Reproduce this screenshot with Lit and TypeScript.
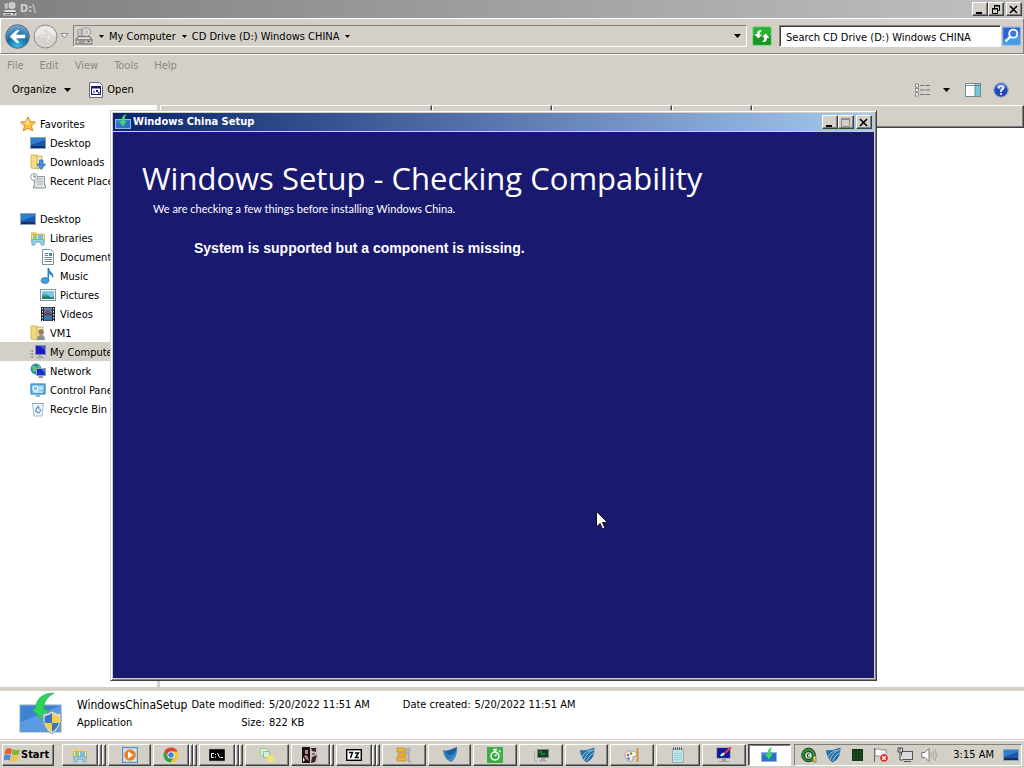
import { LitElement, html, svg, css, TemplateResult } from "lit";
import { customElement, property } from "lit/decorators.js";

const setup = svg`
  <rect x="0.5" y="5.5" width="15" height="9" fill="#3f83d6" stroke="#8fb6e0"/>
  <path d="M1 14V9L15 6V14Z" fill="#2f6fc6"/>
  <path d="M11.500 0C8 1 6.500 3.500 6.500 7H4L8 12.500L11.500 7H9.500C9.500 4 10 2 11.500 0Z" fill="#3ddc62"/>`;

const icons: Record<string, TemplateResult> = {
  drive: svg`
    <path d="M1 11L3 8.500H13L15 11V15H1Z" fill="#e2e1de" stroke="#777"/>
    <path d="M1.500 11.500H14.500" stroke="#555"/><path d="M3 13.300H9" stroke="#666"/><rect x="11" y="12.500" width="2" height="1" fill="#333"/>
    <circle cx="10" cy="4.500" r="3.800" fill="#dcdcda" stroke="#8a8a8a" stroke-width=".8"/><circle cx="10" cy="4.500" r="1.200" fill="#fff" stroke="#777" stroke-width=".6"/>
    <path d="M2 3L6 1.500V8H3Z" fill="#c4c4c2" stroke="#888" stroke-width=".6"/>`,
  doc: svg`
    <path d="M1.500 .5H11.500L14.500 3.500V15.500H1.500Z" fill="#fff" stroke="#667"/>
    <rect x="3.500" y="4.500" width="9" height="8" fill="#fff" stroke="#16167c"/><rect x="3" y="4" width="10" height="2.500" fill="#16167c"/>
    <path d="M5 8.500L6.500 10L5 11.500" stroke="#16167c" fill="none"/><path d="M8 8V10H10V8ZM10 10H11.500V11.500H10Z" fill="#16167c"/>`,
  refresh: svg`
    <rect x=".5" y=".5" width="15" height="15" rx="1" fill="#2fae35" stroke="#8fd692"/><rect x="1" y="8" width="14" height="7" fill="#189522"/>
    <path d="M8 3.500L6 3.200Q4 4 4 6.500H2L5 10L8 7H6Q6 5 8 3.500ZM8 12.500L10 12.800Q12 12 12 9.500H14L11 6L8 9H10Q10 11 8 12.500Z" fill="#fff"/>`,
  search: svg`
    <rect x=".5" y=".5" width="15" height="15" fill="#2f62cf" stroke="#8fb4ee"/><path d="M1 15V11L15 7V15Z" fill="#3fa0e4"/>
    <circle cx="9.500" cy="6" r="3.400" fill="#3c78d8" stroke="#fff" stroke-width="1.600"/><path d="M7 8.500L3 12.500" stroke="#fff" stroke-width="2"/>`,
  views: svg`
    <g fill="#fff" stroke="#777" stroke-width=".8"><rect x=".5" y="2" width="3" height="3"/><rect x=".5" y="6.500" width="3" height="3"/><rect x=".5" y="11" width="3" height="3"/></g>
    <path d="M5 3.500H16M5 8H16M5 12.500H16" stroke="#777" stroke-dasharray="4.500 1"/>`,
  pane: svg`
    <rect x=".5" y="1.500" width="15" height="13" fill="#fff" stroke="#6a8d96"/><rect x="10" y="2" width="5" height="12" fill="#79c3d4"/><path d="M1 3.500H15M10 2V14" stroke="#6a8d96"/>`,
  help: svg`
    <circle cx="8" cy="8" r="7.300" fill="#2348b4" stroke="#a4b2d2" stroke-width="1.200"/><ellipse cx="8" cy="4.500" rx="5" ry="3" fill="#5f86dc"/>
    <path d="M5.700 6.200Q5.700 4 8 4T10.300 6Q10.300 7.300 8 8.500V10" fill="none" stroke="#fff" stroke-width="1.700"/><rect x="7.100" y="11" width="1.800" height="1.800" fill="#fff"/>`,
  star: svg`<path d="M8 .8L10.200 5.600L15.400 6.100L11.500 9.600L12.700 14.800L8 12.100L3.300 14.800L4.500 9.600L.6 6.100L5.800 5.600Z" fill="#ffc63c" stroke="#e0822a"/><path d="M8 3L9.300 6.500L8 9L5 7Z" fill="#ffe9a0"/>`,
  desktop: svg`<rect x="0" y="2" width="16" height="12" fill="#8fa5ba"/><rect x="1" y="3" width="14" height="10" fill="#1b55a8"/><path d="M1 3H15V5L1 10Z" fill="#2f7fd0"/><rect x="1" y="11" width="14" height="2" fill="#123066"/>`,
  downloads: svg`<path d="M1 1H7L9 3V15L1 14Z" fill="#f3dc82" stroke="#c9a94a" stroke-width=".8"/><path d="M7 2H12V14H7Z" fill="#f9eab0" stroke="#c9a94a" stroke-width=".8"/><path d="M9.500 6H13V10H15.500L11.300 15.500L7 10H9.500Z" fill="#3f94de" stroke="#1f64ac" stroke-width=".7"/>`,
  recent: svg`<path d="M4.500 3.500H14.500V12H15.500V15H3.500V13H4.500Z" fill="#e2e6e6" stroke="#8c9699"/><path d="M7 6H13M7 8.500H13M7 11H13" stroke="#a3adb0"/><circle cx="4" cy="4" r="3.400" fill="#fff" stroke="#8c9699"/><path d="M4 2V4H6" stroke="#666" fill="none"/>`,
  libraries: svg`<path d="M1 2H6L7 3.500H14V6H1Z" fill="#eccf6c"/><path d="M1.500 4.500H14.500V12H1.500Z" fill="#f8e8a2" stroke="#d6b552"/><path d="M3 5H7V9H3Z" fill="#8ed084"/><path d="M8 5H13V9H8Z" fill="#7bbbe6"/><path d="M2 15V10.500Q2 9.500 3 9.500H13Q14 9.500 14 10.500V15H11V12H5V15Z" fill="#9ad3f0" stroke="#5aa3cf" stroke-width=".8"/>`,
  documents: svg`<path d="M2.500 .5H10.500L13.500 3.500V15.500H2.500Z" fill="#fff" stroke="#7f93a6"/><path d="M4.500 4.500H8M4.500 6.500H8M4.500 8.500H12M4.500 10.500H12M4.500 12.500H12" stroke="#6e88a4"/><rect x="9" y="4" width="3" height="3" fill="#4d86c4"/>`,
  music: svg`<path d="M7.500 0H9Q9.500 3 12 5T12.500 10.500Q12.500 7 9 6V12.500H7.500Z" fill="#2b86c8"/><ellipse cx="5" cy="12.500" rx="4" ry="3" fill="#3d9fdc" stroke="#1f6ca8" stroke-width=".6"/>`,
  pictures: svg`<rect x=".5" y="2.500" width="15" height="11" fill="#fff" stroke="#8397a8"/><rect x="2" y="4" width="12" height="8" fill="#7cc8ea"/><path d="M2 9Q6 6 9 9T14 9V12H2Z" fill="#23786c"/><path d="M2 8Q4 6 7 8L9 9.500H2Z" fill="#4ca68a"/>`,
  videos: svg`<rect x="1" y="1" width="14" height="14" fill="#23282e"/><rect x="4" y="1.500" width="8" height="6" fill="#4f86b4"/><rect x="4" y="8.500" width="8" height="6" fill="#3c75ac"/><path d="M5 6L8 3.500L11 6.500V7.500H5Z" fill="#8a4a42"/><path d="M2.500 2V15M13.500 2V15" stroke="#e6e6e6" stroke-dasharray="1.500 1.500"/>`,
  user: svg`<path d="M1 1H7L8 3V15L1 14Z" fill="#f0d878" stroke="#c8aa4c" stroke-width=".8"/><path d="M7 2H13V14H7Z" fill="#f7e6a4" stroke="#c8aa4c" stroke-width=".8"/><circle cx="11" cy="7" r="2.700" fill="#9a7a62"/><path d="M7 15Q7 10 11 10T15 15Z" fill="#8a8f94"/>`,
  computer: svg`<path d="M1 6V14M2.500 6V14" stroke="#999" stroke-dasharray="2 1"/><rect x="5.500" y="1.500" width="10" height="9" fill="#1a1ac0" stroke="#8a8fa8"/><path d="M10 2H15V7Z" fill="#3d52e6"/><path d="M8 11H12V13H14V14.500H6V13H8Z" fill="#a9adb8"/>`,
  network: svg`<circle cx="6" cy="6" r="5.400" fill="#2c86b8"/><path d="M2 3Q6 2 7 5T3 9ZM8 1Q11 3 10 6L8 5Z" fill="#5fc27a"/><rect x="6.500" y="5.500" width="9" height="7" fill="#1634c4" stroke="#9aa6bd"/><path d="M11 6H15V10Z" fill="#4470ee"/><path d="M9 13H13V15H8Z" fill="#8e97a6"/>`,
  control: svg`<rect x=".5" y="1.500" width="15" height="11" rx="1" fill="#4a9ad6" stroke="#8ab2cf"/><rect x="2" y="3" width="12" height="8" fill="#79c0ec"/><circle cx="5.500" cy="6.500" r="2.500" fill="none" stroke="#fff" stroke-width="1.200"/><path d="M9 5H13M9 7H13M4 10H12" stroke="#fff"/><path d="M6 13H10V15H5Z" fill="#9fb4c4"/>`,
  recycle: svg`<path d="M2.500 2.500H13.500L12 15H4Z" fill="#f1f6fa" stroke="#a9bccb"/><path d="M2 2.500H14" stroke="#8fa5b8"/><path d="M8 5.500L10.500 9.500L9 11.500H6.500L5.500 9Z" fill="none" stroke="#4c86cf" stroke-width="1.400" stroke-dasharray="2.500 .8"/>`,
  setup,
  flag: svg`<path d="M1.500 2.500Q4.500 .5 8 2L7 7.200Q4 6 .5 7.500Z" fill="#e8612c"/><path d="M8.700 2.300Q12 4 16 2.200L14.800 7.500Q11 9 7.700 7.500Z" fill="#7db83a"/><path d="M.3 8.300Q3.500 7 6.800 8.200L5.800 13.500Q3 12 -.7 13.700Z" fill="#4a8fd8"/><path d="M7.500 8.300Q11 10 14.600 8.500L13.500 13.700Q10 15.200 6.500 13.700Z" fill="#f6c33a"/>`,
  media: svg`<rect x=".5" y=".5" width="15" height="15" fill="#d6e4f2" stroke="#5f8fc2" stroke-width="1.400"/><circle cx="8" cy="8" r="5.800" fill="#ef7f1c"/><path d="M6 4.500L11.500 8L6 11.500Z" fill="#fff"/>`,
  chrome: svg`<circle cx="8" cy="8" r="7.500" fill="#f7c632"/><path d="M8 .5A7.500 7.500 0 0 0 1.500 4.200L5 10L8 4.500H14.600A7.500 7.500 0 0 0 8 .5Z" fill="#dd4335"/><path d="M1.500 4.200A7.500 7.500 0 0 0 7.500 15.500L11 9.700L5 10Z" fill="#2fa04e"/><circle cx="8" cy="8" r="3.600" fill="#fff"/><circle cx="8" cy="8" r="2.700" fill="#3c7fe8"/>`,
  cmd: svg`<rect x="0" y="2" width="16" height="12" fill="#000" stroke="#999" stroke-width=".6"/><path d="M5 6.500H2.500V10.500H5M6.500 7V8M6.500 9.500V10.500M8.500 6L10.500 10.500M11.500 10.500H14" stroke="#fff" fill="none"/>`,
  folders: svg`<rect x="1.500" y="1.500" width="7" height="7" fill="#dff0cf" stroke="#9fcf80"/><rect x="4.500" y="4.500" width="6" height="6" fill="#d4efda" stroke="#7cc4ae"/><rect x="8" y="8" width="7" height="7" fill="#f4e07a"/>`,
  faces: svg`<rect width="8" height="16" fill="#1a1218"/><rect x="8" width="8" height="16" fill="#cdbfc2"/><path d="M3 3H6V7H3ZM2 9L5 8L7 14L4 12Z" fill="#b88b8b"/><path d="M9 1H14V5L10 4ZM10 10L15 8L13 15L9 16Z" fill="#3a2228"/><path d="M10 6H13V8H10Z" fill="#9d6060"/><path d="M1 10L3 13L1 15Z" fill="#e6dada"/>`,
  sevenzip: svg`<rect x=".7" y="2.700" width="14.600" height="10.600" fill="#fff" stroke="#000" stroke-width="1.400"/><path d="M3 5.500H6.500L4.500 11M9 6H12.500L9.500 10.500H13" stroke="#000" stroke-width="1.400" fill="none"/>`,
  winrar: svg`<path d="M1 1H9V5H1ZM2 6H10V9H2ZM1 10H10V14H1Z" fill="#efb62c" stroke="#b98a2a" stroke-width=".7"/><path d="M11 1H14V4H13V12L15 15H12V6H10V3Z" fill="#b8bcc0" stroke="#888" stroke-width=".5"/>`,
  shield: svg`<path d="M1 3Q6 5 15 0Q15.500 11 9 15Q2 12 1 3Z" fill="#2a7cbc"/><path d="M4 4.500L15 0Q13 8 8 8Q5 8 4 4.500Z" fill="#1c5e96"/><path d="M6 13Q12 10 14 5Q14 11 9 15Z" fill="#3c94d0"/>`,
  timer: svg`<rect width="16" height="16" fill="#3fae49"/><circle cx="8" cy="9" r="4" fill="none" stroke="#fff" stroke-width="1.500"/><path d="M6 2.500H10M8 3V5M8 9L10 7M12 3.500L13.500 5" stroke="#fff" stroke-width="1.300"/>`,
  vm: svg`<path d="M1.500 4V14H4" stroke="#aaa" fill="none"/><rect x="4.500" y="2.500" width="11" height="8" fill="#123c24" stroke="#77857c"/><path d="M6 5H9M8 7H12" stroke="#3fbf5c"/><path d="M8 11H12V13H14V14.500H6V13H8Z" fill="#a6aaae"/>`,
  wings: svg`<path d="M1 3Q7 4 15.500 .5Q16 12 7.500 15.500Q1.500 11 1 3Z" fill="#236fa8"/><path d="M5 13Q7 6 15 2.500M7.500 14Q9 9 15 5.500M3 10Q5 5 12 3" stroke="#a8d0ea" fill="none" stroke-width=".9"/>`,
  paint: svg`<path d="M1 9Q1 4 7 4T13 8Q12 10 10 9.500T9 13Q8 15 5 14T1 9Z" fill="#f2efe6" stroke="#9fa6ad"/><circle cx="4" cy="8" r="1.200" fill="#d94d3a"/><circle cx="7" cy="6.500" r="1.200" fill="#4c9e3f"/><circle cx="4.500" cy="11.500" r="1.200" fill="#3b72d0"/><path d="M13.500 1V15" stroke="#d8913a" stroke-width="2"/>`,
  notepad: svg`<rect x="2.500" y="2.500" width="11" height="13" fill="#bfe3e6" stroke="#8fb0b4"/><path d="M4 6.500H12M4 8.500H12M4 10.500H12M4 12.500H12" stroke="#a4d0d6"/><path d="M3 1.500H13" stroke="#444" stroke-width="2" stroke-dasharray="1 1"/>`,
  display: svg`<rect x="1" y="1" width="13" height="10" fill="#11159c" stroke="#555" stroke-width=".6"/><path d="M4 9Q5 5 9 6L8 9Z" fill="#28c2a8"/><path d="M15 0L8 7" stroke="#e23c52" stroke-width="2"/><path d="M5 9L8 6" stroke="#fff" stroke-width="1.500"/><path d="M6 12H10V14H13V15H3V14H6Z" fill="#9aa0a6"/>`,
  gauge: svg`<circle cx="7.500" cy="8" r="6.800" fill="#2c9a3c" stroke="#1e3a22"/><circle cx="7.500" cy="8.500" r="4" fill="#d9f0d9" stroke="#154a1c" stroke-width="1.400"/><path d="M9 7H6.500V10H9" stroke="#154a1c" fill="none"/><rect x="12" y="9" width="3" height="6" fill="#e8cf3a" stroke="#555" stroke-width=".6"/>`,
  cpu: svg`<rect x="3" y="2" width="11" height="12" fill="#0c3412"/><path d="M5.500 2V14M8.500 2V14M11.500 2V14M3 5H14M3 8H14M3 11H14" stroke="#1f5a28" stroke-width=".7"/>`,
  alert: svg`<path d="M1.500 15V1" stroke="#666"/><path d="M2 2.500Q5 1 7 2.500T13 2.500V9H2Z" fill="#fff" stroke="#888"/><circle cx="11" cy="11" r="4.300" fill="#dc3030" stroke="#fff" stroke-width=".6"/><path d="M9.300 9.300L12.700 12.700M12.700 9.300L9.300 12.700" stroke="#fff" stroke-width="1.300"/>`,
  lan: svg`<rect x="4.500" y="4.500" width="11" height="8" fill="#d8dadc" stroke="#555"/><path d="M7 14.500H14" stroke="#555"/><path d="M1 1H5.500V5H1ZM3 5V13H6" fill="#eee" stroke="#444"/><path d="M3 1V4" stroke="#444"/>`,
  sound: svg`<path d="M.8 5.500H4L8 1.500V14.500L4 10.500H.8Z" fill="#fff" stroke="#777"/><path d="M10 5.500Q11.500 8 10 10.500M12 3.500Q14.500 8 12 12.500M14 2Q17 8 14 14" fill="none" stroke="#999" stroke-width=".8"/>`,
};

const icon = (name: string) =>
  html`<svg class="icon" viewBox="0 0 16 16" aria-hidden="true">${icons[name]}</svg>`;
const caret = html`<svg class="caret" viewBox="0 0 7 4" aria-hidden="true"><path d="M0 0H7L3.500 4Z" fill="#000"/></svg>`;

const base = css`
  * { box-sizing: border-box; }
  button, input {
    font: inherit; color: inherit; background: none; border: 0; padding: 0; margin: 0; border-radius: 0;
  }
  .icon { width: 16px; height: 16px; flex: none; display: block; }
  .caret { width: 7px; height: 4px; flex: none; display: block; }
`;

@customElement("window-controls")
class WindowControls extends LitElement {
  @property() middle = "maximize";
  @property({ type: Boolean }) muted = false;
  static styles = [base, css`
    :host { display: flex; flex: none; }
    .ctl {
      width: 16px; height: 14px; background: #d4d0c8; display: grid; place-items: center;
      border: 1px solid; border-color: #fff #404040 #404040 #fff; box-shadow: inset -1px -1px #808080;
    }
    .close { margin-left: 2px; }
    svg { width: 10px; height: 9px; display: block; }
  `];
  render() {
    const ink = this.muted ? "#8f8c84" : "#000";
    return html`
      <button class="ctl" aria-label="Minimize"><svg viewBox="0 0 10 9"><path d="M1 8H7" stroke="#000" stroke-width="2"/></svg></button>
      <button class="ctl" aria-label=${this.middle}><svg viewBox="0 0 10 9">${this.middle === "restore"
        ? svg`<path d="M3.500 3V.5H8.500V5.500H6.500M3 1H9M1.500 3.500H6.500V8.500H1.500ZM1 4H7" fill="none" stroke="#000"/>`
        : svg`<path d="M.5 .5H8.500V8.500H.5ZM0 1.500H9" fill="none" stroke=${ink}/>`}</svg></button>
      <button class="ctl close" aria-label="Close"><svg viewBox="0 0 10 9"><path d="M1 1L8 8M8 1L1 8" stroke="#000" stroke-width="1.600"/></svg></button>`;
  }
}

@customElement("folder-tree")
class FolderTree extends LitElement {
  static styles = [base, css`
    :host { display: block; padding-top: 9px; overflow: hidden; }
    .list { list-style: none; margin: 0; padding: 0; }
    .group + .group { margin-top: 19px; }
    .row { display: flex; align-items: center; gap: 4px; width: 100%; height: 19px; white-space: nowrap; }
    .label { padding-top: 2px; }
    .l0 { padding-left: 20px; }
    .l1 { padding-left: 30px; }
    .l2 { padding-left: 40px; }
    .current { background: #d4d0c8; }
  `];
  groups: [number, string, string][][] = [
    [[0, "star", "Favorites"], [1, "desktop", "Desktop"], [1, "downloads", "Downloads"], [1, "recent", "Recent Places"]],
    [[0, "desktop", "Desktop"], [1, "libraries", "Libraries"], [2, "documents", "Documents"], [2, "music", "Music"],
     [2, "pictures", "Pictures"], [2, "videos", "Videos"], [1, "user", "VM1"], [1, "computer", "My Computer"],
     [1, "network", "Network"], [1, "control", "Control Panel"], [1, "recycle", "Recycle Bin"]],
  ];
  render() {
    return this.groups.map(g => html`<ul class="list group">${g.map(([level, ic, label]) => html`
      <li><button class="row l${level} ${ic === "computer" ? "current" : ""}">${icon(ic)}<span class="label">${label}</span></button></li>`)}</ul>`);
  }
}

@customElement("setup-window")
class SetupWindow extends LitElement {
  static styles = [base, css`
    :host {
      display: flex; flex-direction: column; background: #d4d0c8; padding: 1px;
      border: 1px solid; border-color: #d4d0c8 #404040 #404040 #d4d0c8;
      box-shadow: inset 1px 1px #fff, inset -1px -1px #808080;
    }
    .bar {
      display: flex; align-items: center; gap: 2px; height: 18px; margin: 1px 1px 0; padding: 0 2px;
      background: linear-gradient(to right, #0a246a, #a6caf0); color: #fff;
    }
    .name { flex: 1; font-size: 11px; line-height: 14px; font-weight: 700; margin: 0; }
    .body { flex: 1; margin: 1px; background: #191970; color: #fff; padding: 27px 29px; }
    .title { margin: 0; font: 400 31px/38px "Open Sans", sans-serif; white-space: nowrap; }
    .sub { margin: 4px 0 0 11px; font: 11px/16px "Lato", sans-serif; }
    .message { margin: 23px 0 0 52px; font: 700 14px/16px "Liberation Sans", sans-serif; }
  `];
  render() {
    return html`
      <header class="bar">${icon("setup")}<h2 class="name">Windows China Setup</h2><window-controls muted></window-controls></header>
      <section class="body">
        <h1 class="title">Windows Setup - Checking Compability</h1>
        <p class="sub">We are checking a few things before installing Windows China.</p>
        <p class="message">System is supported but a component is missing.</p>
      </section>`;
  }
}

@customElement("task-bar")
class TaskBar extends LitElement {
  static styles = [base, css`
    :host { display: flex; gap: 8px; height: 28px; padding: 3px 2px 2px; background: #d4d0c8; border-top: 1px solid #fff; box-shadow: 0 -1px #d4d0c8; }
    .raised { background: #d4d0c8; border: 1px solid; border-color: #fff #404040 #404040 #fff; box-shadow: inset -1px -1px #808080; }
    .start { display: flex; align-items: center; gap: 1px; width: 52px; padding-left: 1px; font-weight: 700; }
    .tasks { flex: 1; display: grid; grid-template-columns: repeat(16, 1fr); gap: 2px; min-width: 0; }
    .task { display: flex; align-items: stretch; min-width: 0; }
    .face { flex: 1; display: grid; place-items: center; min-width: 0; }
    .leaf { width: 4px; }
    .task.active .face { background: #fff; border-color: #404040 #fff #fff #404040; box-shadow: inset 1px 1px #808080; }
    .tray { display: flex; align-items: center; gap: 8px; margin-left: -5px; padding: 0 2px 0 6px; border: 1px solid; border-color: #808080 #fff #fff #808080; }
    .clock { margin: 0 1px 0 8px; white-space: nowrap; }
  `];
  tasks: [string, string, number][] = [
    ["libraries", "Explorer", 2], ["media", "Media Player", 0], ["chrome", "Chrome", 2], ["cmd", "Command Prompt", 2],
    ["folders", "Folders", 0], ["faces", "Photo", 1], ["sevenzip", "7-Zip", 2], ["winrar", "Archive", 0],
    ["shield", "Shield", 0], ["timer", "Timer", 0], ["vm", "Virtual machine", 0], ["wings", "Security", 0],
    ["paint", "Paint", 0], ["notepad", "Notepad", 0], ["display", "Display", 0], ["setup", "Windows China Setup", 0],
  ];
  render() {
    return html`
      <button class="raised start">${icon("flag")}Start</button>
      <nav class="tasks">${this.tasks.map(([ic, label, leaves]) => html`
        <div class="task ${ic === "setup" ? "active" : ""}">
          <button class="raised face" aria-label=${label}>${icon(ic)}</button>
          ${Array.from({ length: leaves }, () => html`<span class="raised leaf"></span>`)}
        </div>`)}</nav>
      <div class="tray">${["gauge", "wings", "cpu", "alert", "lan", "sound"].map(icon)}
        <time class="clock">3:15 AM</time>${icon("desktop")}</div>`;
  }
}

@customElement("app-root")
class AppRoot extends LitElement {
  static styles = [base, css`
    :host {
      display: flex; flex-direction: column; height: 100vh; position: relative; overflow: hidden;
      background: #d4d0c8; color: #000; font: 11px/14px "DejaVu Sans Condensed", "Noto Sans", sans-serif;
    }
    .titlebar { display: flex; align-items: center; gap: 2px; height: 18px; padding: 0 2px; color: #d4d0c8;
      background: linear-gradient(to right, #808080, #c0c0c0); font-weight: 700; }
    .titlebar .name { flex: 1; }
    .address-row { display: flex; align-items: center; height: 36px; padding: 0 2px 0 4px;
      border: 1px solid; border-color: #fff #808080 #808080 #fff; box-shadow: 0 1px #fff; }
    .round { width: 25px; height: 25px; display: block; }
    .round svg { width: 25px; height: 25px; display: block; }
    .fwd { margin-left: 3px; }
    .recent { width: 9px; height: 6px; margin: 0 4px 0 2px; }
    .recent svg { display: block; width: 9px; height: 6px; }
    .path { flex: 1; display: flex; align-items: center; height: 22px; gap: 6px; padding: 0 5px 0 1px; min-width: 0;
      border: 1px solid; border-color: #808080 #fff #fff #808080; }
    .crumb { display: flex; align-items: center; gap: 5px; white-space: nowrap; }
    .crumb .caret { width: 5px; height: 3px; }
    .crumb .label { padding-top: 1px; }
    .path .drive { width: 18px; height: 18px; }
    .path .drop { margin-left: auto; }
    .go { width: 20px; height: 20px; margin: 0 7px 0 5px; }
    .go .icon, .find .icon { width: 100%; height: 100%; }
    .search { width: 222px; height: 22px; background: #fff; padding: 2px 6px 0; border: 1px solid; border-color: #808080 #fff #fff #808080; box-shadow: inset 1px 1px #404040; }
    .find { width: 19px; height: 20px; margin-left: 1px; }
    .menu { display: flex; gap: 16px; height: 22px; align-items: center; padding: 1px 7px 0; color: #8c8981; }
    .tools { display: flex; align-items: center; height: 29px; padding: 0 15px 2px 12px; }
    .tool { display: flex; align-items: center; gap: 3px; }
    .organize { gap: 8px; margin-right: 17px; }
    .views { gap: 12px; margin: 0 15px 0 auto; }
    .help { margin-left: 12px; }
    .main { flex: 1; display: grid; grid-template-columns: 157px 3px 1fr; min-height: 0; background: #fff; }
    .split { background: #d4d0c8; }
    .cols { width: 100%; border-collapse: separate; border-spacing: 0; table-layout: fixed; }
    .cols th { height: 23px; padding: 0; background: #d4d0c8; border: 1px solid; border-color: #fff #404040 #404040 #fff; box-shadow: inset -1px -1px #808080; }
    .wide { width: 272px; } .mid { width: 120px; } .slim { width: 80px; }
    .details { display: flex; align-items: flex-start; gap: 15px; height: 53px; background: #fff; border-top: 4px solid #d4d0c8; padding: 0 19px; }
    .big { width: 43px; height: 45px; flex: none; margin-top: 1px; }
    .facts { display: grid; grid-template-columns: auto auto auto auto auto; column-gap: 4px; row-gap: 4px; margin: 7px 0 0; }
    .facts dt, .facts dd { margin: 0; line-height: 14px; white-space: nowrap; }
    .facts dt { text-align: right; }
    .facts .file { font-size: 12px; }
    .facts .created { padding-left: 29px; }
    .window { position: absolute; left: 110px; top: 110px; width: 767px; height: 571px; }
    .pointer { position: absolute; left: 596px; top: 511px; width: 12px; height: 19px; }
  `];
  render() {
    return html`
      <header class="titlebar">${icon("drive")}<span class="name">D:\\</span><window-controls middle="restore"></window-controls></header>
      <div class="address-row">
        <button class="round" aria-label="Back"><svg viewBox="0 0 25 25">
          <defs><radialGradient id="b" cx=".5" cy=".9" r=".9"><stop offset="0" stop-color="#38c0ea"/><stop offset=".5" stop-color="#1668a4"/><stop offset="1" stop-color="#7fb2d2"/></radialGradient></defs>
          <circle cx="12.500" cy="12.500" r="11.800" fill="url(#b)" stroke="#4e6e86"/>
          <path d="M5 12.500L11.500 6.500H14L10.500 11H20V14H10.500L14 18.500H11.500Z" fill="#fff" stroke="#fff" stroke-width=".6"/></svg></button>
        <button class="round fwd" aria-label="Forward"><svg viewBox="0 0 25 25"><circle cx="12.500" cy="12.500" r="11.500" fill="#d6d4d0" stroke="#8c8c8c"/><path d="M2 12Q3 2 12.500 2T23 12Z" fill="#eceae8"/>
          <path d="M20 12.500L13.500 6.500H11L14.500 11H6V14H14.500L11 18.500H13.500Z" fill="#e2e0dc" stroke="#cbc9c5" stroke-width=".6"/></svg></button>
        <button class="recent" aria-label="Recent pages"><svg viewBox="0 0 9 6"><path d="M1 .5H8L4.500 5Z" fill="#eee" stroke="#888"/></svg></button>
        <nav class="path">
          <svg class="icon drive" viewBox="0 0 16 16">${icons.drive}</svg>
          <button class="crumb">${caret}<span class="label">My Computer</span></button>
          <button class="crumb">${caret}<span class="label">CD Drive (D:) Windows CHINA</span>${caret}</button>
          <button class="drop" aria-label="Previous locations">${caret}</button>
        </nav>
        <button class="go" aria-label="Refresh">${icon("refresh")}</button>
        <input class="search" aria-label="Search" value="Search CD Drive (D:) Windows CHINA">
        <button class="find" aria-label="Find">${icon("search")}</button>
      </div>
      <nav class="menu">${["File", "Edit", "View", "Tools", "Help"].map(m => html`<button>${m}</button>`)}</nav>
      <div class="tools">
        <button class="tool organize">Organize ${caret}</button>
        <button class="tool">${icon("doc")}Open</button>
        <button class="tool views" aria-label="Views">${icon("views")}${caret}</button>
        <button aria-label="Preview pane">${icon("pane")}</button>
        <button class="help" aria-label="Help">${icon("help")}</button>
      </div>
      <main class="main">
        <folder-tree></folder-tree>
        <div class="split"></div>
        <div><table class="cols"><thead><tr><th class="wide"></th><th class="mid"></th><th class="mid"></th><th class="slim"></th><th></th></tr></thead></table></div>
      </main>
      <footer class="details">
        <svg class="big" viewBox="0 0 43 45" aria-hidden="true">
          <rect x="1" y="13" width="41" height="27" fill="#3f82d2" stroke="#8aa9cc"/>
          <path d="M2 39V30L41 14V39Z" fill="#5b9be2"/>
          <path d="M35 1Q18 1 16 17H13L22 27L30 19L25 17Q24 7 35 1Z" fill="#2ed25c" stroke="#1fae46" stroke-width=".6"/>
          <path d="M33 19Q37 22 42 22Q43 36 33 42Q23 36 24 22Q29 22 33 19Z" fill="#dce3ea" stroke="#8d9aa6"/>
          <path d="M33 21Q29 24 26 24Q25 28 26 31H33Z" fill="#3c74c4"/><path d="M33 21Q37 24 40 24Q41 28 40 31H33Z" fill="#f0cf4c"/>
          <path d="M26 31H33V40Q28 37 26 31Z" fill="#f0cf4c"/><path d="M40 31H33V40Q38 37 40 31Z" fill="#3c74c4"/>
        </svg>
        <dl class="facts">
          <dd class="file">WindowsChinaSetup</dd><dt>Date modified:</dt><dd>5/20/2022 11:51 AM</dd><dt class="created">Date created:</dt><dd>5/20/2022 11:51 AM</dd>
          <dd>Application</dd><dt>Size:</dt><dd>822 KB</dd>
        </dl>
      </footer>
      <task-bar></task-bar>
      <setup-window class="window"></setup-window>
      <svg class="pointer" viewBox="0 0 12 19" aria-hidden="true"><path d="M.5 .5V16L4 12.500L6.500 18L9 17L6.500 11.500H11.500Z" fill="#fff" stroke="#111"/></svg>`;
  }
}
